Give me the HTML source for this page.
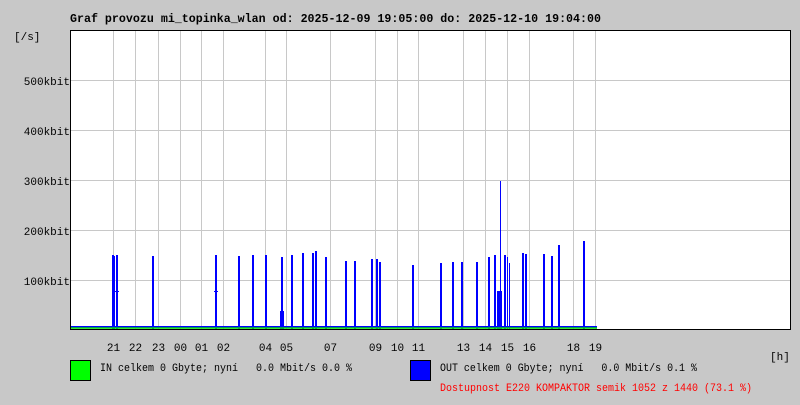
<!DOCTYPE html>
<html><head><style>
body{margin:0;background:#c8c8c8;width:800px;height:400px;overflow:hidden;font-family:"Liberation Mono","DejaVu Sans Mono",monospace;}
text{white-space:pre;}
</style></head><body>
<svg width="800" height="400" xmlns="http://www.w3.org/2000/svg" font-family="Liberation Mono, DejaVu Sans Mono, monospace" font-size="11">
<rect width="800" height="400" fill="#c8c8c8"/>
<text x="70" y="22" font-size="12" font-weight="bold" textLength="531" lengthAdjust="spacingAndGlyphs">Graf provozu mi_topinka_wlan od: 2025-12-09 19:05:00 do: 2025-12-10 19:04:00</text>
<text x="14" y="40">[/s]</text>
<rect x="70" y="30" width="720" height="299.5" fill="#fff"/>
<g stroke="#c8c8c8" stroke-width="1">
<line x1="70" x2="790" y1="80.5" y2="80.5"/><line x1="70" x2="790" y1="130.5" y2="130.5"/><line x1="70" x2="790" y1="180.5" y2="180.5"/><line x1="70" x2="790" y1="230.5" y2="230.5"/><line x1="70" x2="790" y1="280.5" y2="280.5"/>
<line x1="113.5" x2="113.5" y1="30" y2="329"/><line x1="135.5" x2="135.5" y1="30" y2="329"/><line x1="158.5" x2="158.5" y1="30" y2="329"/><line x1="180.5" x2="180.5" y1="30" y2="329"/><line x1="201.5" x2="201.5" y1="30" y2="329"/><line x1="223.5" x2="223.5" y1="30" y2="329"/><line x1="265.5" x2="265.5" y1="30" y2="329"/><line x1="286.5" x2="286.5" y1="30" y2="329"/><line x1="330.5" x2="330.5" y1="30" y2="329"/><line x1="375.5" x2="375.5" y1="30" y2="329"/><line x1="397.5" x2="397.5" y1="30" y2="329"/><line x1="418.5" x2="418.5" y1="30" y2="329"/><line x1="463.5" x2="463.5" y1="30" y2="329"/><line x1="485.5" x2="485.5" y1="30" y2="329"/><line x1="507.5" x2="507.5" y1="30" y2="329"/><line x1="529.5" x2="529.5" y1="30" y2="329"/><line x1="573.5" x2="573.5" y1="30" y2="329"/><line x1="595.5" x2="595.5" y1="30" y2="329"/>
</g>
<g fill="#0000ff">
<rect x="112" y="255" width="2" height="74"/><rect x="114" y="256" width="1" height="73"/><rect x="116" y="255" width="2" height="74"/><rect x="112" y="291" width="7" height="1"/>
<rect x="152" y="256" width="2" height="73"/>
<rect x="215" y="255" width="2" height="74"/><rect x="214" y="291" width="4" height="1"/>
<rect x="238" y="256" width="2" height="73"/>
<rect x="252" y="255" width="2" height="74"/>
<rect x="265" y="255" width="2" height="74"/>
<rect x="281" y="257" width="2" height="72"/><rect x="280" y="311" width="4" height="18"/>
<rect x="291" y="255" width="2" height="74"/>
<rect x="302" y="253" width="2" height="76"/>
<rect x="312" y="253" width="2" height="76"/><rect x="315" y="251" width="2" height="78"/>
<rect x="325" y="257" width="2" height="72"/>
<rect x="345" y="261" width="2" height="68"/>
<rect x="354" y="261" width="2" height="68"/>
<rect x="371" y="259" width="2" height="70"/>
<rect x="376" y="259" width="2" height="70"/><rect x="379" y="262" width="2" height="67"/>
<rect x="412" y="265" width="2" height="64"/>
<rect x="440" y="263" width="2" height="66"/>
<rect x="452" y="262" width="2" height="67"/>
<rect x="461" y="262" width="2" height="67"/>
<rect x="476" y="262" width="2" height="67"/>
<rect x="488" y="257" width="2" height="72"/>
<rect x="494" y="255" width="2" height="74"/>
<rect x="497" y="291" width="5" height="38"/>
<rect x="500" y="181" width="1" height="148"/>
<rect x="504" y="255" width="2" height="74"/><rect x="507" y="257" width="1" height="72"/><rect x="509" y="263" width="1" height="66"/>
<rect x="522" y="253" width="2" height="76"/><rect x="525" y="254" width="2" height="75"/>
<rect x="543" y="254" width="2" height="75"/>
<rect x="551" y="256" width="2" height="73"/>
<rect x="558" y="245" width="2" height="84"/>
<rect x="583" y="241" width="2" height="88"/>
<rect x="70" y="326" width="527" height="1.5"/>
</g>
<rect x="70" y="327.3" width="527" height="1.5" fill="#00e000"/>
<rect x="70.5" y="30.5" width="720" height="299" fill="none" stroke="#000"/>
<g text-anchor="end"><text x="70" y="85">500kbit</text><text x="70" y="135">400kbit</text><text x="70" y="185">300kbit</text><text x="70" y="235">200kbit</text><text x="70" y="285">100kbit</text></g>
<g text-anchor="middle">
<text x="113.5" y="351">21</text><text x="135.5" y="351">22</text><text x="158.5" y="351">23</text><text x="180.5" y="351">00</text><text x="201.5" y="351">01</text><text x="223.5" y="351">02</text><text x="265.5" y="351">04</text><text x="286.5" y="351">05</text><text x="330.5" y="351">07</text><text x="375.5" y="351">09</text><text x="397.5" y="351">10</text><text x="418.5" y="351">11</text><text x="463.5" y="351">13</text><text x="485.5" y="351">14</text><text x="507.5" y="351">15</text><text x="529.5" y="351">16</text><text x="573.5" y="351">18</text><text x="595.5" y="351">19</text>
</g>
<text x="770" y="360">[h]</text>
<rect x="70.5" y="360.5" width="20" height="20" fill="#00ff00" stroke="#000"/>
<text x="100" y="371" textLength="252" lengthAdjust="spacingAndGlyphs">IN celkem 0 Gbyte; nyní   0.0 Mbit/s 0.0 %</text>
<rect x="410.5" y="360.5" width="20" height="20" fill="#0000ff" stroke="#000"/>
<text x="440" y="371" textLength="257" lengthAdjust="spacingAndGlyphs">OUT celkem 0 Gbyte; nyní   0.0 Mbit/s 0.1 %</text>
<text x="440" y="391" fill="#ff0000" textLength="312" lengthAdjust="spacingAndGlyphs">Dostupnost E220 KOMPAKTOR semik 1052 z 1440 (73.1 %)</text>
</svg>
</body></html>
